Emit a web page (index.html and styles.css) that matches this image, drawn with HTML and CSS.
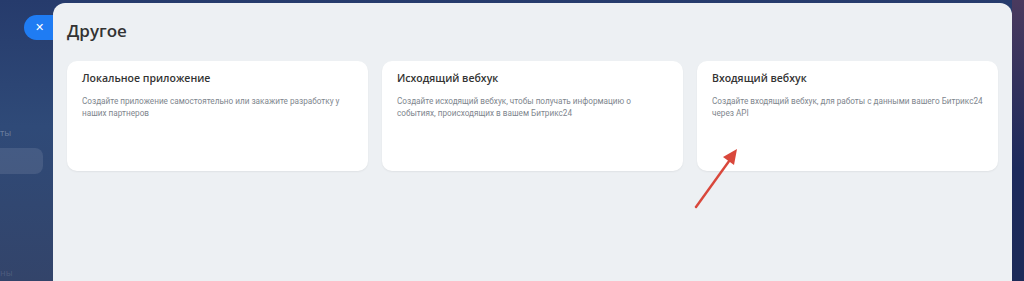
FILE: index.html
```html
<!DOCTYPE html>
<html lang="ru">
  <head>
    <meta charset="UTF-8" />
    <meta name="viewport" content="width=device-width, initial-scale=1.0" />
    <title>Другое</title>
    <link rel="stylesheet" href="styles.css">
  </head>

  <body>
    <div class="sidebar">
      <div class="side-label">ты</div>
      <div class="side-item"></div>
      <div class="side-label side-bottom">ны</div>
    </div>

    <button class="close-btn">&#x2715;</button>

    <div class="panel">
      <h1 class="panel-title">Другое</h1>
      <div class="cards">
        <div class="card">
          <div class="card-title">Локальное приложение</div>
          <div class="card-text">Создайте приложение самостоятельно или закажите разработку у наших партнеров</div>
        </div>
        <div class="card">
          <div class="card-title">Исходящий вебхук</div>
          <div class="card-text">Создайте исходящий вебхук, чтобы получать информацию о событиях, происходящих в вашем Битрикс24</div>
        </div>
        <div class="card">
          <div class="card-title">Входящий вебхук</div>
          <div class="card-text">Создайте входящий вебхук, для работы с данными вашего Битрикс24 через API</div>
        </div>
      </div>
    </div>

    <div class="right-strip"></div>

    <!-- annotation arrow -->
    <svg class="arrow" width="60" height="70" viewBox="0 0 60 70">
      <line x1="8" y1="64" x2="44" y2="14" stroke="#d9473b" stroke-width="2.4" stroke-linecap="round" />
      <polygon points="49,6 35,14 46,22" fill="#d9473b" />
    </svg>
  </body>
</html>
```

FILE: styles.css
```css
/* Page background */
body {
  display: flex;
  height: 100vh;
  margin: 0;
  overflow: hidden;
  background: linear-gradient(180deg, #263b6c 0%, #2f4a78 45%, #33446a 100%);
  font-family: "Open Sans", "Liberation Sans", sans-serif;
}

/* Left menu peeking out */
.sidebar {
  width: 53px;
  flex-shrink: 0;
  display: flex;
  flex-direction: column;
  padding: 127px 0 2px 0;
  box-sizing: border-box;
}

.side-label {
  font-size: 9px;
  line-height: 12px;
  color: rgba(255, 255, 255, 0.3);
}

.side-item {
  margin: 9px 10px 0 -10px;
  height: 26px;
  border-radius: 8px;
  background-color: rgba(255, 255, 255, 0.1);
}

.side-bottom {
  margin-top: auto;
  color: rgba(255, 255, 255, 0.15);
}

/* Close button */
.close-btn {
  position: absolute;
  top: 15px;
  left: 24px;
  width: 34px;
  height: 25px;
  padding: 0 4px 0 0;
  border: none;
  border-radius: 13px 0 0 13px;
  background-color: #1f7cf3;
  color: #ffffff;
  font-size: 11px;
  line-height: 25px;
}

/* Slider panel */
.panel {
  flex: 1;
  margin-top: 3px;
  padding: 17px 14px 0 14px;
  background-color: #edf0f3;
  border-radius: 12px 12px 0 0;
  position: relative;
  z-index: 1;
}

.panel-title {
  margin: 0 0 19px 0;
  font-size: 17px;
  font-weight: 600;
  line-height: 22px;
  color: #333333;
}

.cards {
  display: grid;
  grid-template-columns: repeat(3, 1fr);
  gap: 14px;
}

.card {
  height: 110px;
  box-sizing: border-box;
  padding: 9px 15px;
  background-color: #ffffff;
  border-radius: 10px;
  box-shadow: 0 1px 2px rgba(0, 0, 0, 0.06);
}

.card-title {
  font-size: 10.5px;
  font-weight: 600;
  line-height: 16px;
  color: #333333;
  margin-bottom: 9px;
}

.card-text {
  font-family: Roboto, "Open Sans", sans-serif;
  font-size: 8.2px;
  line-height: 12px;
  color: #80868e;
}

/* Dark strip on the right */
.right-strip {
  width: 12px;
  flex-shrink: 0;
  background: linear-gradient(180deg, #4a3a5e 0%, #1d2a5c 60%, #1c2a58 100%);
}

/* Annotation arrow */
.arrow {
  position: absolute;
  left: 688px;
  top: 143px;
  z-index: 2;
}
```
